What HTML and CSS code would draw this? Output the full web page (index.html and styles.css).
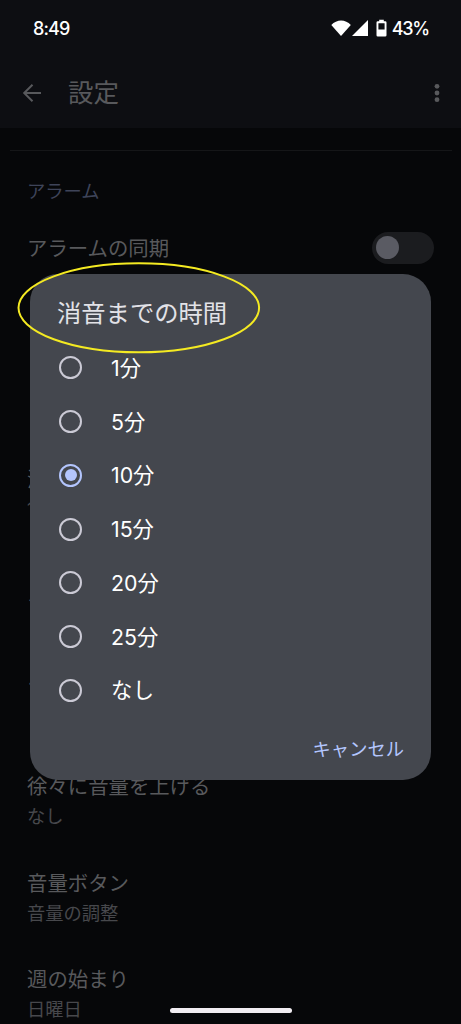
FILE: index.html
```html
<!DOCTYPE html>
<html lang="ja">
<head>
<meta charset="utf-8">
<title>設定</title>
<link rel="stylesheet" href="styles.css">
</head>
<body>
<div class="screen">
  <header class="top">
    <div class="status">
      <span class="clock">8:49</span>
      <svg class="status-icons" width="58" height="20" viewBox="0 0 58 20" fill="#fff">
        <path d="M0.300 6C5.600 0 14.600 0 19.800 6L10 17Z"/>
        <path d="M37 1V17H21Z"/>
        <path fill-rule="evenodd" d="M48.200 0.700h4.600v1.600h1.400q1.300 0 1.300 1.300v12.700q0 1.300-1.300 1.300h-7.400q-1.300 0-1.300-1.300V3.600q0-1.300 1.300-1.300h1.400zM47.400 4.200v6.300h6.200V4.200z"/>
      </svg>
      <span class="percent">43%</span>
    </div>
    <div class="appbar">
      <svg class="back" width="20" height="20" viewBox="0 0 20 20" fill="none" stroke="#58595c" stroke-width="2"><path d="M19 10H2.500M10.500 1.700L2.200 10L10.500 18.300"/></svg>
      <h1 class="page-title">設定</h1>
      <svg class="more" width="6" height="20" viewBox="0 0 6 20" fill="#58595c"><circle cx="3" cy="3.300" r="2.400"/><circle cx="3" cy="10" r="2.400"/><circle cx="3" cy="16.700" r="2.400"/></svg>
    </div>
  </header>
  <main class="settings">
    <hr class="divider">
    <h2 class="section">アラーム</h2>
    <div class="row sync">
      <div class="label">アラームの同期</div>
      <div class="switch"><div class="thumb"></div></div>
    </div>
    <div class="row silence"><div class="label">消音までの時間</div><div class="value">10分</div></div>
    <div class="row"><div class="label">スヌーズの長さ</div></div>
    <div class="row"><div class="label">アラームの音量</div></div>
    <div class="row"><div class="label">徐々に音量を上げる</div><div class="value">なし</div></div>
    <div class="row"><div class="label">音量ボタン</div><div class="value">音量の調整</div></div>
    <div class="row"><div class="label">週の始まり</div><div class="value">日曜日</div></div>
  </main>
  <section class="dialog">
    <h2 class="dialog-title">消音までの時間</h2>
    <div class="options">
      <div class="option"><span class="radio"></span><span class="choice">1分</span></div>
      <div class="option"><span class="radio"></span><span class="choice">5分</span></div>
      <div class="option"><span class="radio checked"></span><span class="choice">10分</span></div>
      <div class="option"><span class="radio"></span><span class="choice">15分</span></div>
      <div class="option"><span class="radio"></span><span class="choice">20分</span></div>
      <div class="option"><span class="radio"></span><span class="choice">25分</span></div>
      <div class="option"><span class="radio"></span><span class="choice kana">なし</span></div>
    </div>
    <div class="actions"><span class="cancel">キャンセル</span></div>
  </section>
  <svg class="highlight" width="246" height="94" viewBox="0 0 246 94" fill="none" stroke="#f4ea22" stroke-width="2"><ellipse cx="122.800" cy="46.800" rx="120.300" ry="44.500"/></svg>
  <div class="home-bar"></div>
</div>
</body>
</html>
```
FILE: styles.css
```css
* { box-sizing: border-box; }
body { margin: 0; background: #060709; }
h1, h2 { margin: 0; font-weight: 400; }
svg { display: block; flex: none; }
.screen {
  position: relative;
  width: 461px;
  height: 1024px;
  overflow: hidden;
  background: #060709;
  font-family: Inter, "Noto Sans CJK JP", sans-serif;
}
.top { height: 128px; background: #0d0e12; }
.status {
  display: flex;
  align-items: center;
  height: 57px;
  padding: 0 32px 0 33px;
  color: #fff;
  font-size: 18px;
  font-weight: 500;
  letter-spacing: -0.9px;
}
.clock { flex: 1; }
.percent { letter-spacing: -1.200px; }
.status-icons { margin-right: 3px; }
.appbar {
  display: flex;
  align-items: center;
  height: 71px;
  padding: 0 21px 0 22px;
}
.page-title {
  flex: 1;
  margin-left: 26px;
  color: #58595c;
  font-size: 25.500px;
  line-height: 36px;
}
.settings { padding: 22px 27px 0; }
.divider {
  height: 1px;
  margin: 0 -18px 0 -17px;
  border: 0;
  background: #151618;
}
.section {
  margin-top: 26px;
  color: #3e4459;
  font-size: 18.300px;
  line-height: 28px;
}
.row { height: 96.500px; color: #58595c; white-space: nowrap; }
.label { font-size: 20.400px; line-height: 30px; }
.value { font-size: 18.300px; line-height: 28px; color: #47484c; }
.row.sync {
  display: flex;
  justify-content: space-between;
  height: 260px;
  padding-top: 29px;
}
.row.silence { height: 114px; }
.switch {
  width: 62px;
  height: 32px;
  margin-top: -2px;
  padding: 4px;
  border-radius: 16px;
  background: #1b1c1f;
}
.thumb { width: 23px; height: 23px; border-radius: 50%; background: #5a5b63; }
.dialog {
  position: absolute;
  left: 30px;
  top: 274px;
  width: 401px;
  height: 506px;
  padding: 21px 27px 0;
  border-radius: 28px;
  background: #44474e;
}
.dialog-title { color: #e2e2e7; font-size: 24.300px; line-height: 36px; }
.options { margin-top: 10px; }
.option {
  display: flex;
  align-items: center;
  gap: 29px;
  height: 53.750px;
  padding-left: 2px;
  color: #fff;
  font-size: 21.300px;
  line-height: 30px;
}
.choice.kana { letter-spacing: 0.500px; }
.radio {
  display: flex;
  align-items: center;
  justify-content: center;
  width: 23px;
  height: 23px;
  border: 2px solid #cbcad5;
  border-radius: 50%;
}
.radio.checked { border-color: #b3c5fd; }
.radio.checked::after {
  content: "";
  width: 12px;
  height: 12px;
  border-radius: 50%;
  background: #b3c5fd;
}
.actions { display: flex; justify-content: flex-end; margin-top: 18px; }
.cancel { color: #b3c5fd; font-size: 18.300px; line-height: 28px; }
.highlight { position: absolute; left: 16px; top: 261px; }
.home-bar {
  position: absolute;
  left: 170px;
  top: 1008px;
  width: 122px;
  height: 5px;
  border-radius: 3px;
  background: #f1edf2;
}
```
